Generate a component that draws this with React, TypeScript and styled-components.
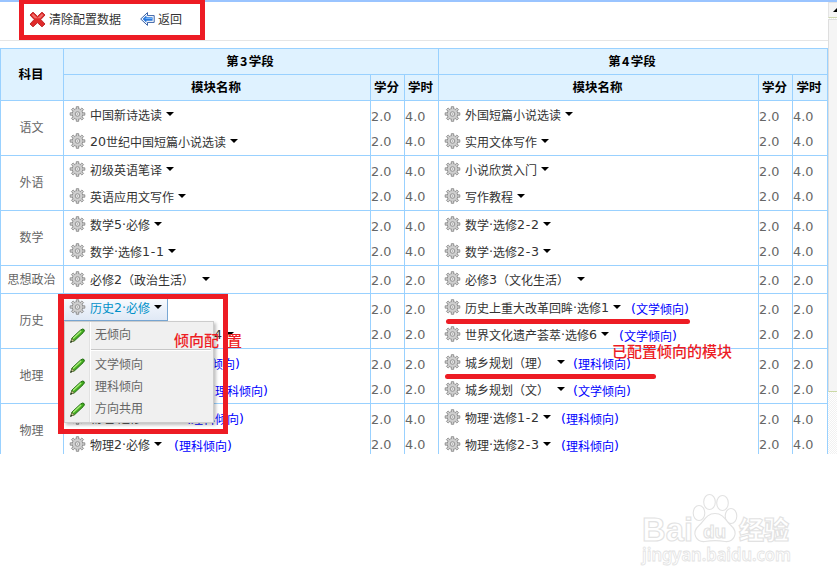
import React from 'react';
import styled, { createGlobalStyle } from 'styled-components';

const LINE = '#99d1ff';
const RED = '#ed1c24';

const GlobalStyle = createGlobalStyle`
  body { margin: 0; background: #fff; }
  * { box-sizing: border-box; }
  body, #root { font: 12px/1 "Noto Sans CJK SC", sans-serif; }
`;

const Page = styled.div`
  position: relative;
  width: 837px;
  height: 584px;
  overflow: hidden;
  background: #fff;
`;
const Screen = styled.div`
  display: flex;
  height: 454px;
  overflow: hidden;
  border-top: 2px solid #9ac4ff;
`;
const Main = styled.div`
  width: 828px;
  flex: none;
`;
const Toolbar = styled.div`
  height: 39px;
  border-bottom: 1px solid #e6e6e6;
  display: flex;
  align-items: center;
  gap: 19px;
  padding: 0 0 4px 29px;
`;
const ToolButton = styled.div`
  display: flex;
  align-items: center;
  gap: 3px;
  color: #333;
  white-space: nowrap;
`;
const Table = styled.div`
  margin-top: 7px;
  display: grid;
  grid-template-columns: 63px 307px 34px 34px 320px 34px 35px;
  width: 828px;
  border-right: 1px solid ${LINE};
`;
const Head = styled.div<{ $cols?: number; $rows?: number }>`
  grid-column: span ${p => p.$cols ?? 1};
  grid-row: span ${p => p.$rows ?? 1};
  min-height: 26px;
  border-top: 1px solid ${LINE};
  border-left: 1px solid ${LINE};
  background: #dff2ff;
  color: #000;
  font-weight: 700;
  font-size: 12.5px;
  display: flex;
  align-items: center;
  justify-content: center;
  padding-right: 2px;
  white-space: nowrap;
`;
const HeadDigit = styled.span`
  width: 10px;
  text-align: center;
`;
const Cell = styled.div`
  border-top: 1px solid ${LINE};
  border-left: 1px solid ${LINE};
  min-width: 0;
`;
const Subject = styled(Cell)`
  display: flex;
  align-items: center;
  justify-content: center;
  padding: 0 1px 2px 0;
  color: #666;
`;
const Scores = styled(Cell)`
  display: flex;
  flex-direction: column;
  justify-content: center;
  padding: 2px 0 0 0;
  color: #666;
  font: 12.8px/25px "DejaVu Sans", sans-serif;
`;
const Line = styled.div`
  height: 27px;
  display: flex;
  align-items: center;
  position: relative;
  white-space: nowrap;
`;
const Trigger = styled.div<{ $active?: boolean }>`
  height: 27px;
  display: flex;
  align-items: center;
  padding: 0 6px 0 5px;
  color: ${p => (p.$active ? '#0090c8' : '#333')};
  background: ${p => (p.$active ? 'linear-gradient(#fff, #eef3fb 45%, #dfe8f5)' : 'none')};
  box-shadow: ${p => (p.$active ? 'inset -1px -1px #79a7d4' : 'none')};
`;
const Label = styled.span`
  display: flex;
  align-items: center;
  margin: 0 4px 0 4px;
`;
const Glyph = styled.span<{ $w: number }>`
  width: ${p => p.$w}px;
  display: inline-flex;
  justify-content: center;
  font: 12.6px/16px "DejaVu Sans", sans-serif;
`;
const Caret = styled.i<{ $gap?: number }>`
  margin-left: ${p => p.$gap ?? 0}px;
  margin-top: -1px;
  border: 4px solid transparent;
  border-top: 4px solid #000;
  border-bottom: 0;
`;
const Tendency = styled.span<{ $gap: number }>`
  margin: 2px 0 0 ${p => p.$gap}px;
  color: #00f;
  display: flex;
  align-items: center;
`;
const Menu = styled.div`
  position: absolute;
  z-index: 2;
  left: 0;
  top: 27px;
  width: 150px;
  height: 102px;
  padding-top: 2px;
  color: #666;
  border: 1px solid #ccc;
  box-shadow: 2px 2px 3px rgba(0, 0, 0, 0.25);
  background: linear-gradient(90deg, #f0f0f0 24px, #e2e2e2 24px 25px, #fff 25px 26px, #f0f0f0 26px);
`;
const MenuItem = styled.div`
  height: 22px;
  display: flex;
  align-items: center;
  gap: 10px;
  padding-left: 5px;
`;
const MenuText = styled.span`
  padding-bottom: 3px;
`;
const Separator = styled.div`
  height: 2px;
  margin: 3px 2px 3px 26px;
  background: #c6c6c6;
  border-bottom: 1px solid #fff;
`;
const ScrollRail = styled.div`
  width: 9px;
  display: flex;
  flex-direction: column;
  background: repeating-conic-gradient(#f1f1f1 0 25%, #fff 0 50%) 0 0 / 2px 2px;
`;
const ScrollUp = styled.div`
  height: 16px;
  margin-bottom: 1px;
  background: #f5f5f5;
  border: 1px solid #e4e4e4;
  border-right: 0;
  border-bottom: 1px solid #cfd8b0;
  display: flex;
  align-items: center;
  justify-content: flex-end;
  overflow: hidden;
`;
const Thumb = styled.div`
  height: 373px;
  background: #f5f5f5;
  border: 1px solid #dedede;
  border-right: 0;
  border-bottom-color: #cbd9a6;
`;
const Frame = styled.div<{ $x: number; $y: number; $w: number; $h: number; $edges: string }>`
  position: absolute;
  z-index: 4;
  left: ${p => p.$x}px;
  top: ${p => p.$y}px;
  width: ${p => p.$w}px;
  height: ${p => p.$h}px;
  border: solid ${RED};
  border-width: ${p => p.$edges};
`;
const Stroke = styled.div<{ $x: number; $y: number; $w: number }>`
  position: absolute;
  z-index: 4;
  left: ${p => p.$x}px;
  top: ${p => p.$y}px;
  width: ${p => p.$w}px;
  height: 5px;
  border-radius: 3px;
  background: ${RED};
`;
const Note = styled.div<{ $x: number; $y: number }>`
  position: absolute;
  z-index: 5;
  left: ${p => p.$x}px;
  top: ${p => p.$y}px;
  display: flex;
  gap: 8px;
  color: ${RED};
  font-size: 15px;
  font-weight: 500;
  line-height: 18px;
  white-space: nowrap;
`;
const Watermark = styled.svg`
  position: absolute;
  left: 636px;
  top: 486px;
`;
const GearIcon = styled.svg`
  flex: none;
  margin-top: -2px;
`;

const Gear = () => (
  <GearIcon width="17" height="16" viewBox="-0.5 0 17 16">
    <circle cx="8" cy="8" r="5.3" fill="#d3d3d3" stroke="#8b8b8b" />
    <g fill="#d0d0d0" stroke="#8b8b8b" strokeWidth="0.9">
      {[0, 45, 90, 135, 180, 225, 270, 315].map(a => (
        <path key={a} d="M6.8 3V.7h2.4V3" transform={`rotate(${a} 8 8)`} />
      ))}
    </g>
    <circle cx="8" cy="8" r="4.7" fill="#cfcfcf" />
    <circle cx="8" cy="8" r="2.3" fill="#e6e6e6" stroke="#949494" />
    <circle cx="8" cy="8" r="0.7" fill="#a0a0a0" />
  </GearIcon>
);
const Pencil = () => (
  <svg width="15" height="15" viewBox="0 0 15 15">
    <path d="M.8 14.2 2 10 10.4 2.2Q12.8.2 14 1.5T13 4.8L4.7 12.6Z" fill="#43ad20" stroke="#226b12" />
    <path d="M3 10.6 11.2 3" stroke="#a9ec79" strokeWidth="1.3" />
    <path d="M.8 14.2 1.8 10.8 4.2 12.7Z" fill="#f1e9b0" stroke="#4c4f26" strokeWidth=".6" />
    <path d="M.5 14.5 2 12.8" stroke="#222" />
  </svg>
);
const Cross = () => (
  <svg width="17" height="17" viewBox="0 0 17 17">
    <path
      d="M1 4 4 1.2 8.5 5.4 13 1.2 16 4 11.8 8.5 16 13 13 15.8 8.5 11.7 4 15.8 1 13 5.2 8.5Z"
      fill="#e02a2a" stroke="#c02a2c" strokeLinejoin="round"
    />
    <path d="m2.6 4.1 1.5-1.3 4.4 4.1 4.4-4.1 1.5 1.3-3.2 3.1H5.8Z" fill="#f2706b" />
  </svg>
);
const BackArrow = () => (
  <svg width="15" height="14" viewBox="0 0 15 14">
    <path d="M.7 7 7.5.6v3h6.7v6.8H7.500v3Z" fill="#fff" stroke="#3a62a6" />
    <path d="M2.600 7 6.400 3.200v2h6.200v3.600H6.400v2Z" fill="#2a78dc" />
    <path d="M5.500 6.500h6.500" stroke="#6db6ff" />
  </svg>
);

const HALF: Record<string, number> = { '-': 6, '·': 4, '(': 5, ')': 5 };
const Mixed = ({ text }: { text: string }) => (
  <>
    {(text.match(/[0-9\-·()]|[^0-9\-·()]+/g) ?? []).map((part, i) =>
      /[0-9\-·()]/.test(part) ? <Glyph key={i} $w={HALF[part] ?? 8}>{part}</Glyph> : <span key={i}>{part}</span>,
    )}
  </>
);

type Module = { name: string; tag?: string; open?: boolean };
type Group = { subject: string; left: Module[]; right: Module[]; hours: [string, string] };

const groups: Group[] = [
  { subject: '语文', hours: ['4.0', '4.0'], left: [{ name: '中国新诗选读' }, { name: '20世纪中国短篇小说选读' }], right: [{ name: '外国短篇小说选读' }, { name: '实用文体写作' }] },
  { subject: '外语', hours: ['4.0', '4.0'], left: [{ name: '初级英语笔译' }, { name: '英语应用文写作' }], right: [{ name: '小说欣赏入门' }, { name: '写作教程' }] },
  { subject: '数学', hours: ['4.0', '4.0'], left: [{ name: '数学5·必修' }, { name: '数学·选修1-1' }], right: [{ name: '数学·选修2-2' }, { name: '数学·选修2-3' }] },
  { subject: '思想政治', hours: ['2.0', '2.0'], left: [{ name: '必修2（政治生活）' }], right: [{ name: '必修3（文化生活）' }] },
  { subject: '历史', hours: ['2.0', '2.0'], left: [{ name: '历史2·必修', open: true }, { name: '中外历史人物评说·选修4' }], right: [{ name: '历史上重大改革回眸·选修1', tag: '文学倾向' }, { name: '世界文化遗产荟萃·选修6', tag: '文学倾向' }] },
  { subject: '地理', hours: ['2.0', '2.0'], left: [{ name: '区域地理1-1', tag: '文学倾向' }, { name: '海洋地理·选修1-2', tag: '理科倾向' }], right: [{ name: '城乡规划（理）', tag: '理科倾向' }, { name: '城乡规划（文）', tag: '文学倾向' }] },
  { subject: '物理', hours: ['4.0', '4.0'], left: [{ name: '物理·选修1-1', tag: '理科倾向' }, { name: '物理2·必修', tag: '理科倾向' }], right: [{ name: '物理·选修1-2', tag: '理科倾向' }, { name: '物理·选修2-3', tag: '理科倾向' }] },
];

const tagGap = (name: string) => (name.endsWith('）') ? 2 : name.endsWith('修') ? 6 : 4);

const ModuleLine = ({ name, tag, open }: Module) => (
  <Line>
    <Trigger $active={open}>
      <Gear />
      <Label><Mixed text={name} /></Label>
      <Caret $gap={name.endsWith('）') ? 4 : 0} />
    </Trigger>
    {tag && <Tendency $gap={tagGap(name)}><Mixed text={`(${tag})`} /></Tendency>}
    {open && (
      <Menu>
        <MenuItem><Pencil /><MenuText>无倾向</MenuText></MenuItem>
        <Separator />
        {['文学倾向', '理科倾向', '方向共用'].map(t => (
          <MenuItem key={t}><Pencil /><MenuText>{t}</MenuText></MenuItem>
        ))}
      </Menu>
    )}
  </Line>
);

const Term = ({ modules, hours }: { modules: Module[]; hours: string }) => (
  <>
    <Cell>{modules.map(m => <ModuleLine key={m.name} {...m} />)}</Cell>
    <Scores>{modules.map(m => <span key={m.name}>2.0</span>)}</Scores>
    <Scores>{modules.map(m => <span key={m.name}>{hours}</span>)}</Scores>
  </>
);

export default function App() {
  return (
    <Page>
      <GlobalStyle />
      <Screen>
        <Main>
          <Toolbar>
            <ToolButton><Cross />清除配置数据</ToolButton>
            <ToolButton><BackArrow />返回</ToolButton>
          </Toolbar>
          <Table>
            <Head $rows={2}>科目</Head>
            <Head $cols={3}>第<HeadDigit>3</HeadDigit>学段</Head>
            <Head $cols={3}>第<HeadDigit>4</HeadDigit>学段</Head>
            {[0, 1].map(i => (
              <React.Fragment key={i}>
                <Head>模块名称</Head>
                <Head>学分</Head>
                <Head>学时</Head>
              </React.Fragment>
            ))}
            {groups.map(g => (
              <React.Fragment key={g.subject}>
                <Subject>{g.subject}</Subject>
                <Term modules={g.left} hours={g.hours[0]} />
                <Term modules={g.right} hours={g.hours[1]} />
              </React.Fragment>
            ))}
          </Table>
        </Main>
        <ScrollRail>
          <ScrollUp>
            <svg width="4" height="4" viewBox="0 0 4 4"><path d="M0 4 4 0v4Z" /></svg>
          </ScrollUp>
          <Thumb />
        </ScrollRail>
      </Screen>

      <Frame $x={19} $y={0} $w={186} $h={40} $edges="4px 5px 5px 5px" />
      <Frame $x={58} $y={294} $w={170} $h={140} $edges="5px 5px 5px 6px" />
      <Stroke $x={446} $y={319} $w={244} />
      <Stroke $x={445} $y={374} $w={211} />
      <Note $x={174} $y={331}><span>倾向配</span><span>置</span></Note>
      <Note $x={612} $y={342}>已配置倾向的模块</Note>

      <Watermark width="170" height="90" viewBox="0 0 170 90">
        <g fill="#fff" stroke="#e2e2e2" strokeWidth="1.1">
          <ellipse cx="63" cy="27" rx="5.8" ry="7.5" />
          <ellipse cx="73.500" cy="16" rx="5.8" ry="7.5" />
          <ellipse cx="86.500" cy="17" rx="5.8" ry="7.5" />
          <ellipse cx="95" cy="30" rx="5.8" ry="7.5" />
          <path d="M79 27.500c-9 0-11 8-16 12-8 7-3 17 6 16 6-1 14-1 20 0 9 1 14-9 6-16-5-4-7-12-16-12Z" />
          <text x="6" y="55" fontFamily="Liberation Sans" fontWeight="700" fontSize="33" textLength="51" lengthAdjust="spacingAndGlyphs">Bai</text>
          <text x="67" y="51.500" fontFamily="Liberation Sans" fontWeight="700" fontSize="19" textLength="23">du</text>
          <text x="103" y="53" fontFamily="Noto Sans CJK SC" fontWeight="900" fontSize="25" textLength="50">经验</text>
          <text x="6" y="75" fontFamily="Noto Sans" fontWeight="600" fontSize="17.500" strokeWidth="0.8" textLength="149" lengthAdjust="spacingAndGlyphs">jingyan.baidu.com</text>
        </g>
      </Watermark>
    </Page>
  );
}
